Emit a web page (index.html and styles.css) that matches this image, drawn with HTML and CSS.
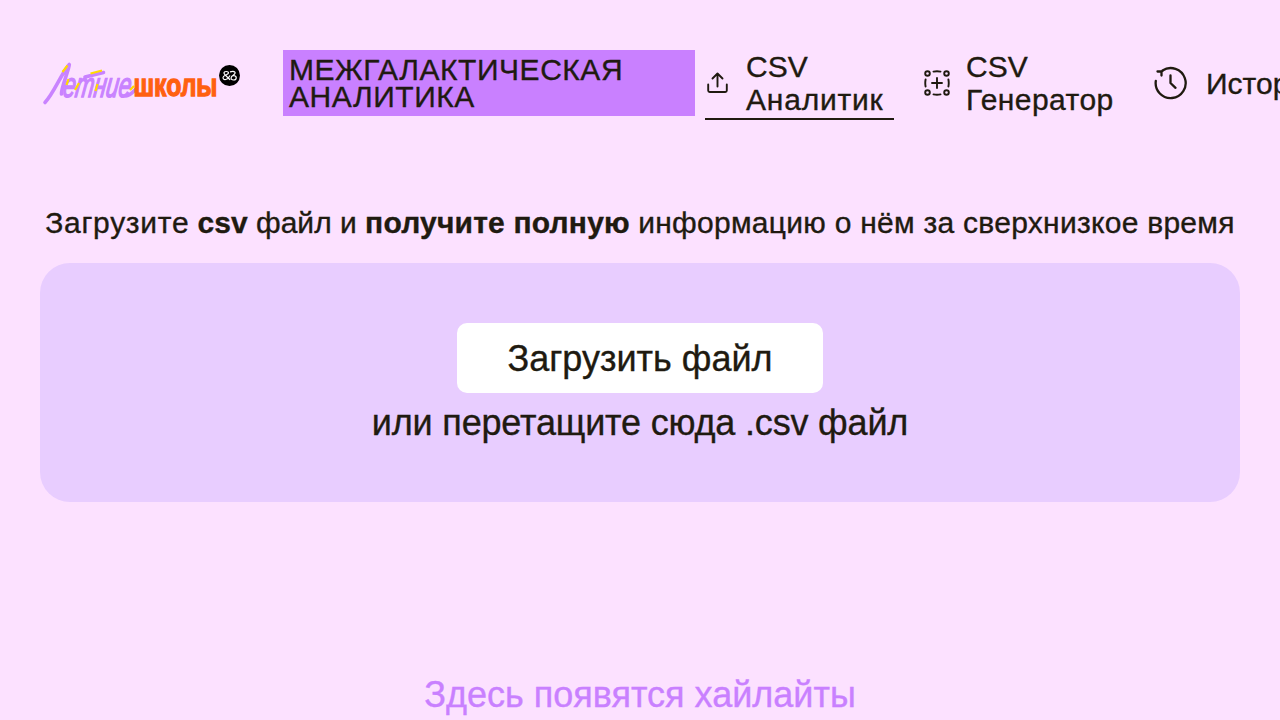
FILE: index.html
```
<!DOCTYPE html>
<html lang="ru">
<head>
<meta charset="utf-8">
<title>Межгалактическая аналитика</title>
<link rel="stylesheet" href="styles.css">
</head>
<body>
<header class="header">
  <svg class="logo" width="204" height="48" viewBox="0 0 204 48" role="img" aria-label="Летние школы">
    <text class="logo-script" transform="translate(22 36.500) skewX(-8)" x="0" y="0" textLength="68" lengthAdjust="spacingAndGlyphs">етние</text>
    <path class="logo-swash" d="M5 42.500C14 33 21 14 29.300 4.500C29 10 21 28 21.500 34M45 17 63.500 12.500M86 36C90 36 94 31 96 29"/>
    <path class="logo-accent" d="M22.500 12 27.500 5.500M50.500 13.500 62 10.500M26.500 25 28.500 19M35 30 39 23M55.500 31 57.500 24M90 30 94 26"/>
    <text class="logo-bold" x="93.500" y="36.300" textLength="84" lengthAdjust="spacingAndGlyphs">школы</text>
    <circle cx="189.500" cy="15.500" r="10.500"/>
    <path class="logo-mark" d="M190 15.500C188 20 183 21 183 17.500C183 15 188.500 15 188.500 13C188.500 11 184 11 184 13C184 15 189 18 190 20M190 11.800C195 10.500 197 12.500 193 15.500C197.500 15.500 197 20 193.500 20C190 20 190.500 16 193.500 15.500"/>
  </svg>
  <h1 class="title">МЕЖГАЛАКТИЧЕСКАЯ АНАЛИТИКА</h1>
  <nav class="nav">
    <a class="nav-item nav-item-active">
      <svg class="icon icon-upload" width="24" height="24" viewBox="0 0 24 24"><path d="M3.200 13.500V19.500Q3.200 21 4.700 21H20.300Q21.800 21 21.800 19.500V13.500M12.500 15.500V2.500M7.500 7.500 12.500 2.500 17.500 7.500"/></svg>
      <span>CSV<br><span class="nav-wide">Аналитик</span></span>
    </a>
    <a class="nav-item nav-item-generator">
      <svg class="icon icon-generator" width="26" height="26" viewBox="0 0 26 26"><circle cx="3.500" cy="3.500" r="2.300"/><circle cx="22.500" cy="3.500" r="2.300"/><circle cx="3.500" cy="22.500" r="2.300"/><circle cx="22.500" cy="22.500" r="2.300"/><path d="M13 8V18M8 13H18M9.500 1.600Q13 .9 16.500 1.600M9.500 24.400Q13 25.100 16.500 24.400M1.600 9.500Q.9 13 1.600 16.500M24.400 9.500Q25.100 13 24.400 16.500"/></svg>
      <span>CSV<br><span class="nav-mid">Генератор</span></span>
    </a>
    <a class="nav-item nav-item-history">
      <svg class="icon icon-history" width="34" height="34" viewBox="0 0 34 34"><path d="M1.800 15A15 15 0 1 0 8.500 4.500M3.500 5.500H7.500V9.500M7.500 5.500 9 4.500M16.500 9.500V17L21.500 21.800"/></svg>
      <span>История</span>
    </a>
  </nav>
</header>
<main class="main">
  <p class="lead"><span class="lead-start">Загрузите</span> <b>csv</b> файл и <b class="lead-strong">получите полную</b> <span class="lead-end">информацию о нём за сверхнизкое время</span></p>
  <section class="dropzone">
    <button class="upload" type="button">Загрузить файл</button>
    <p class="hint">или перетащите сюда .csv файл</p>
  </section>
  <p class="placeholder">Здесь появятся хайлайты</p>
</main>
</body>
</html>
```
FILE: styles.css
```
* { box-sizing: border-box; }
body {
  margin: 0;
  height: 720px;
  overflow: hidden;
  background: #fce1ff;
  color: #201a10;
  font-family: "Liberation Sans", Arial, sans-serif;
  -webkit-text-stroke: .35px currentColor;
}
p, h1 { margin: 0; }
.header {
  display: flex;
  align-items: flex-start;
  padding: 50px 0 0 40px;
  height: 120px;
}
.logo { flex: none; margin: 10px 39px 0 0; -webkit-text-stroke: 0; }
.logo-accent { fill: none; stroke: #fedb00; stroke-width: 2.200; }
.logo-swash { fill: none; stroke: #c983ff; stroke-width: 3.600; stroke-linecap: round; stroke-linejoin: round; }
.logo-script { font-size: 35px; font-style: italic; fill: #c983ff; stroke: #c983ff; stroke-width: 1.500; }
.logo-bold { font-size: 31px; font-weight: 700; fill: #ff6010; stroke: #ff6010; stroke-width: 1.300; }
.logo-mark { fill: none; stroke: #fff; stroke-width: 1.200; }
.title {
  flex: none;
  width: 412px;
  height: 66px;
  padding: 6px;
  background: #c980ff;
  font-size: 30px;
  font-weight: 400;
  line-height: 27px;
  letter-spacing: .54px;
}
.nav { flex: none; display: flex; margin-left: 10px; }
.nav-item {
  flex: none;
  display: flex;
  align-items: center;
  height: 70px;
  padding-bottom: 4px;
  font-size: 30px;
  line-height: 33px;
}
.nav-wide { letter-spacing: .8px; }
.nav-mid { letter-spacing: .45px; }
.nav-item-active { width: 189px; border-bottom: 2px solid #201a10; padding-bottom: 2px; }
.icon { flex: none; fill: none; stroke: #201a10; stroke-width: 1.900; stroke-linecap: round; stroke-linejoin: round; }
.icon-upload { margin-right: 17px; }
.nav-item-generator { width: 230px; margin-left: 30px; }
.icon-generator { margin-right: 16px; }
.icon-history { margin-right: 18px; stroke-width: 2.300; }
.main { padding: 86px 40px 0; text-align: center; }
.lead { font-size: 30px; line-height: 33px; white-space: nowrap; }
.lead-start { letter-spacing: .7px; }
.lead-strong { letter-spacing: .2px; }
.lead-end { letter-spacing: .27px; }
.dropzone {
  display: flex;
  flex-direction: column;
  align-items: center;
  height: 239px;
  margin-top: 24px;
  padding-top: 60px;
  border-radius: 30px;
  background: #e8cdff;
}
.upload {
  width: 366px;
  height: 70px;
  padding: 1px 0 0;
  border: 0;
  border-radius: 10px;
  background: #fff;
  color: inherit;
  font: 36px/40px "Liberation Sans", Arial, sans-serif;
  -webkit-text-stroke: .35px currentColor;
}
.hint { margin-top: 10px; font-size: 36px; line-height: 40px; letter-spacing: -.18px; }
.placeholder { margin-top: 173px; font-size: 36px; line-height: 40px; color: #c980ff; }
```
